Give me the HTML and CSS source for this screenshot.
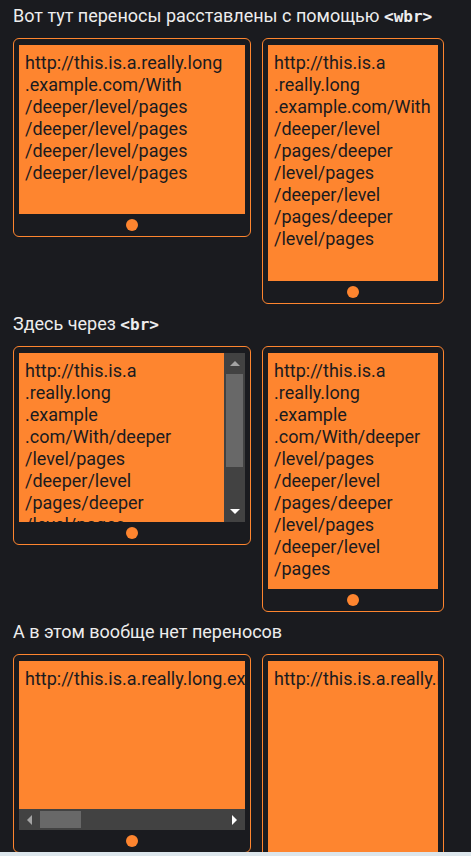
FILE: index.html
```html
<!DOCTYPE html>
<html lang="ru">
<head>
<meta charset="utf-8">
<title>Переносы</title>
<link rel="stylesheet" href="styles.css">
</head>
<body>
<main class="page">
  <section class="demo">
    <h2 class="title">Вот тут переносы расставлены с помощью <code>&lt;wbr&gt;</code></h2>
    <div class="devices">
      <div class="device device--landscape">
        <div class="screen">
          <div class="screen__text">http://this.is.a<wbr>.really.long<wbr>.example.com/With<wbr>/deeper<wbr>/level<wbr>/pages<wbr>/deeper<wbr>/level<wbr>/pages<wbr>/deeper<wbr>/level<wbr>/pages<wbr>/deeper<wbr>/level<wbr>/pages</div>
        </div>
        <span class="home"></span>
      </div>
      <div class="device device--portrait">
        <div class="screen">
          <div class="screen__text">http://this.is.a<wbr>.really.long<wbr>.example.com/With<wbr>/deeper<wbr>/level<wbr>/pages<wbr>/deeper<wbr>/level<wbr>/pages<wbr>/deeper<wbr>/level<wbr>/pages<wbr>/deeper<wbr>/level<wbr>/pages</div>
        </div>
        <span class="home"></span>
      </div>
    </div>
  </section>

  <section class="demo">
    <h2 class="title">Здесь через <code>&lt;br&gt;</code></h2>
    <div class="devices">
      <div class="device device--landscape">
        <div class="screen screen--vbar">
          <div class="screen__text">http://this.is.a<br>.really.long<br>.example<br>.com/With/deeper<br>/level/pages<br>/deeper/level<br>/pages/deeper<br>/level/pages<br>/deeper/level<br>/pages</div>
          <div class="vbar">
            <span class="sb-btn"><svg width="10" height="5" viewBox="0 0 10 5"><polygon points="0,5 5,0 10,5" fill="#a3a3a3"/></svg></span>
            <span class="vbar__track"><span class="vbar__thumb"></span></span>
            <span class="sb-btn"><svg width="10" height="5" viewBox="0 0 10 5"><polygon points="0,0 10,0 5,5" fill="#ffffff"/></svg></span>
          </div>
        </div>
        <span class="home"></span>
      </div>
      <div class="device device--portrait">
        <div class="screen">
          <div class="screen__text">http://this.is.a<br>.really.long<br>.example<br>.com/With/deeper<br>/level/pages<br>/deeper/level<br>/pages/deeper<br>/level/pages<br>/deeper/level<br>/pages</div>
        </div>
        <span class="home"></span>
      </div>
    </div>
  </section>

  <section class="demo">
    <h2 class="title">А в этом вообще нет переносов</h2>
    <div class="devices">
      <div class="device device--landscape">
        <div class="screen">
          <div class="screen__text">http://this.is.a.really.long.example.com/With/deeper/level/pages/deeper/level/pages/deeper/level/pages</div>
          <div class="hbar">
            <span class="sb-btn"><svg width="5" height="10" viewBox="0 0 5 10"><polygon points="5,0 5,10 0,5" fill="#a3a3a3"/></svg></span>
            <span class="hbar__track"><span class="hbar__thumb"></span></span>
            <span class="sb-btn"><svg width="5" height="10" viewBox="0 0 5 10"><polygon points="0,0 0,10 5,5" fill="#ffffff"/></svg></span>
          </div>
        </div>
        <span class="home"></span>
      </div>
      <div class="device device--portrait">
        <div class="screen">
          <div class="screen__text">http://this.is.a.really.long.example.com/With/deeper/level/pages/deeper/level/pages/deeper/level/pages</div>
        </div>
        <span class="home"></span>
      </div>
    </div>
  </section>
</main>
</body>
</html>
```
FILE: styles.css
```css
html {
  overflow: hidden;
  background: #dce6ec;
}

body {
  margin: 0;
  background: #dce6ec;
}

.page {
  height: 852px;
  overflow: hidden;
  box-sizing: border-box;
  padding: 5px 13px 0;
  background: #1a1b1f;
  font-family: Roboto, "Noto Sans", sans-serif;
}

.demo + .demo {
  margin-top: 9px;
}

.title {
  height: 22px;
  margin: 0 0 11px;
  font-size: 18px;
  line-height: 22px;
  font-weight: 400;
  color: #ededed;
  white-space: nowrap;
}

.title code {
  font-family: "DejaVu Sans Mono", monospace;
  font-weight: 700;
  font-size: 16px;
  line-height: 1;
}

.devices {
  display: flex;
  gap: 11px;
  align-items: flex-start;
}

.device {
  display: flex;
  flex-direction: column;
  align-items: center;
  padding: 6px 5px 0;
  border: 1px solid #fe852f;
  border-radius: 6px;
}

.screen {
  display: flex;
  flex-direction: column;
  box-sizing: border-box;
  overflow: hidden;
  background: #fe852f;
}

.screen--vbar {
  flex-direction: row;
}

.device--landscape .screen {
  width: 226px;
  height: 169px;
}

.device--portrait .screen {
  width: 170px;
  height: 236px;
}

.screen__text {
  flex: 1 1 auto;
  min-width: 0;
  min-height: 0;
  overflow: hidden;
  padding: 7px 6px;
  color: #1a1b1f;
  font-size: 18px;
  line-height: 22px;
}

.home {
  width: 12px;
  height: 12px;
  margin: 5px 0;
  border-radius: 50%;
  background: #fe852f;
}

/* scrollbars */
.vbar {
  flex: 0 0 21px;
  display: flex;
  flex-direction: column;
  background: #424242;
}

.hbar {
  flex: 0 0 21px;
  display: flex;
  background: #424242;
}

.sb-btn {
  flex: 0 0 21px;
  width: 21px;
  height: 21px;
  display: flex;
  align-items: center;
  justify-content: center;
}

.sb-btn svg {
  display: block;
}

.vbar__track {
  flex: 1 1 auto;
  padding: 0 2px;
}

.vbar__thumb {
  display: block;
  height: 93px;
  background: #686868;
}

.hbar__track {
  flex: 1 1 auto;
  padding: 2px 0;
}

.hbar__thumb {
  display: block;
  width: 41px;
  height: 100%;
  background: #686868;
}
```
